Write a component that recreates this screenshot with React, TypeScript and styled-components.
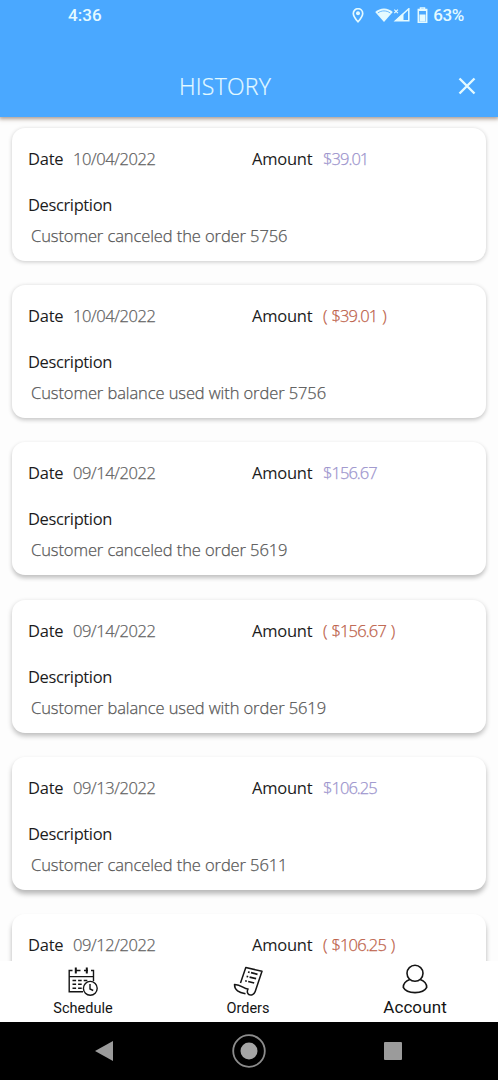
import React from "react";
import styled, { createGlobalStyle } from "styled-components";

const Global = createGlobalStyle`
  * { box-sizing: border-box; }
  body { margin: 0; background: #fdfdfd; }
`;

const Screen = styled.div`
  width: 498px;
  height: 1080px;
  display: flex;
  flex-direction: column;
  overflow: hidden;
  background: #fdfdfd;
  font-family: "Open Sans", "Noto Sans", sans-serif;
`;

const Header = styled.header`
  flex: none;
  height: 117px;
  background: #4aa8ff;
  box-shadow: 0 1px 4px 1px rgba(90, 60, 40, 0.5);
  z-index: 1;
  color: #e4faff;
`;

const StatusBar = styled.div`
  height: 31px;
  padding: 0 34px 0 68px;
  display: flex;
  align-items: center;
  font: 500 17px/31px Roboto, sans-serif;
`;

const Clock = styled.span`
  flex: 1;
  letter-spacing: 0.1px;
`;

const Battery = styled.span`
  letter-spacing: -0.4px;
  margin-left: 5px;
`;

const TitleBar = styled.div`
  height: 86px;
  padding: 24px 22px 0 179px;
  display: flex;
  align-items: flex-start;
  justify-content: space-between;
`;

const Title = styled.h1`
  margin: 0;
  font-weight: 300;
  font-size: 23px;
  line-height: 62px;
  height: 62px;
  letter-spacing: 0.25px;
  -webkit-text-stroke: 0.2px currentColor;
`;

const Close = styled.svg`
  margin-top: 22px;
`;

const List = styled.main`
  flex: 1;
  min-height: 0;
  overflow: hidden;
  padding: 11px 12px 0;
  display: flex;
  flex-direction: column;
  gap: 24.2px;
`;

const Card = styled.article<{ $depth: number }>`
  flex: none;
  height: 133px;
  border-radius: 13px;
  background: #fff;
  padding: 17px 16px 0;
  box-shadow: 0 ${(p) => 1 + p.$depth * 0.6}px ${(p) => 4 + p.$depth * 0.3}px
    rgba(0, 0, 0, ${(p) => 0.21 + p.$depth * 0.015});
`;

const Summary = styled.div`
  display: grid;
  grid-template-columns: 224px 1fr;
  height: 28px;
`;

const Field = styled.div`
  display: flex;
  line-height: 28px;
`;

const Label = styled.span<{ $width?: number }>`
  display: block;
  width: ${(p) => (p.$width ? `${p.$width}px` : "auto")};
  font-size: 16.5px;
  line-height: 28px;
  color: #1c1c1c;
  font-weight: 400;
  letter-spacing: ${(p) => (p.$width ? -0.24 : -0.38)}px;
  white-space: nowrap;
`;

const tones = { plain: "#626262", credit: "#9c94cd", debit: "#bd5f49" };

const Value = styled.span<{ $tone: keyof typeof tones }>`
  font-size: 16.5px;
  font-weight: 300;
  letter-spacing: ${(p) => (p.$tone === "plain" ? -0.4 : p.$tone === "credit" ? -0.95 : -0.85)}px;
  word-spacing: ${(p) => (p.$tone === "debit" ? 1.4 : 0)}px;
  color: ${(p) => tones[p.$tone]};
  -webkit-text-stroke: 0.25px currentColor;
  white-space: pre;
`;

const Details = styled.div`
  padding-top: 18px;
`;

const Description = styled.p`
  margin: 3px 0 0 3px;
  font-size: 16.5px;
  line-height: 28px;
  font-weight: 300;
  letter-spacing: -0.09px;
  color: #585858;
  -webkit-text-stroke: 0.25px currentColor;
  white-space: nowrap;
`;

const Tabs = styled.nav`
  flex: none;
  height: 61px;
  background: #fff;
  display: grid;
  grid-template-columns: 166px 164px 170px;
  z-index: 1;
`;

const Tab = styled.div<{ $active?: boolean }>`
  display: flex;
  flex-direction: column;
  align-items: center;
  color: #141414;
  font: 400 ${(p) => (p.$active ? 17 : 14.5)}px/${(p) => (p.$active ? 20 : 21)}px Roboto, sans-serif;
  letter-spacing: ${(p) => (p.$active ? 0.1 : 0)}px;

  svg {
    margin-top: 3px;
    margin-bottom: ${(p) => (p.$active ? 1 : 2)}px;
  }
`;

const SystemNav = styled.div`
  flex: none;
  height: 58px;
  background: #000;
  display: flex;
  justify-content: space-between;
  align-items: center;
  padding: 0 96px 0 95px;
`;

const PinIcon = () => (
  <svg width="12" height="16" viewBox="0 0 12 16" fill="none" stroke="currentColor">
    <path d="M6 13.8C3.4 10.800 1.300 8 1.300 5.400a4.700 4.700 0 0 1 9.400 0c0 2.600-2.100 5.400-4.700 8.400Z" strokeWidth="1.700" />
    <circle cx="6" cy="5.200" r="2" fill="currentColor" stroke="none" />
  </svg>
);

const SignalIcon = () => (
  <svg width="35" height="16" viewBox="0 0 35 16" fill="none" stroke="currentColor" style={{ marginLeft: 11 }}>
    <path d="M.2 4C5.200-.8 12.800-.8 17.800 4L9 14Z" fill="currentColor" stroke="none" />
    <path d="M2.800 5C6.500 2.200 11.500 2.200 15.200 5" stroke="#4aa8ff" strokeWidth=".8" />
    <path d="m19.300 1.600 3.600 3.600m0-3.600-3.600 3.600" strokeWidth="1.200" />
    <path d="M20.500 12.800 33.800.8v12Z" strokeWidth="1.500" />
    <path d="M20 12.800 28.500 5v7.800Z" fill="currentColor" stroke="none" />
  </svg>
);

const BatteryIcon = () => (
  <svg width="11" height="17" viewBox="0 0 11 17" style={{ marginLeft: 7 }}>
    <path d="M3.500 1h4v1.500h2.200v12.800H1.300V2.500h2.200Z" fill="none" stroke="currentColor" strokeWidth="1.500" />
    <path d="M2.500 7.500h6v7h-6Z" fill="currentColor" />
    <path d="M2 2h7v2H2Z" fill="currentColor" />
  </svg>
);

const ScheduleIcon = () => (
  <svg width="32" height="32" viewBox="0 0 32 32" fill="none" stroke="#151515" strokeWidth="1.400">
    <path d="M5.500 6.500H2.200V27.800H16M8 6.500h5.500M17 6.500h4M24 6.500h2.500V17M2.200 12.600h24.300" />
    <path d="M8.800 3.500v6M19.800 3.500v6" strokeWidth="2" />
    <path d="M5.500 16.500h3.600m2 0h3.600m2 0h3.600M5.500 20.300h3.600m2 0h3.600M5.500 24.200h3.600m2 0h3.600" strokeWidth="1.600" />
    <circle cx="23.300" cy="24.300" r="6.900" fill="#fff" />
    <path d="M23 20v5l3.200 1.500" />
  </svg>
);

const OrdersIcon = () => (
  <svg width="32" height="32" viewBox="0 0 32 32" fill="none" stroke="#151515" strokeWidth="1.500" strokeLinejoin="round">
    <path d="M8.500 19 13.800 3.500l16.200 3.800-6.800 20.200c-1 2.800-4 4.300-6 3.200-2-.9-2.400-3.200-1.200-5.700-4.200.2-6.700-4.700-13.500-4.500 0 6 4.500 7.800 11 9.300" />
    <path d="m16 8 1.600.4m1.400.3 6.500 1.600M14.600 12.400l1.600.4m1.400.3 6.500 1.600M13.200 16.800l1.600.4m1.400.3 6 1.500" strokeWidth="1.700" />
  </svg>
);

const AccountIcon = () => (
  <svg width="32" height="32" viewBox="0 0 32 32" fill="none" stroke="#151515" strokeWidth="1.600" strokeLinejoin="round">
    <circle cx="16" cy="9.300" r="8" />
    <path d="M10.800 15.500C6.600 17 4.300 20 4.300 23.400c3.500 7 19.900 7 23.400 0 0-3.400-2.300-6.400-6.500-7.900" />
  </svg>
);

const entries = [
  { date: "10/04/2022", amount: "$39.01", debit: false, text: "Customer canceled the order 5756" },
  { date: "10/04/2022", amount: "$39.01", debit: true, text: "Customer balance used with order 5756" },
  { date: "09/14/2022", amount: "$156.67", debit: false, text: "Customer canceled the order 5619" },
  { date: "09/14/2022", amount: "$156.67", debit: true, text: "Customer balance used with order 5619" },
  { date: "09/13/2022", amount: "$106.25", debit: false, text: "Customer canceled the order 5611" },
  { date: "09/12/2022", amount: "$106.25", debit: true, text: "" },
];

export default function App() {
  return (
    <>
      <Global />
      <Screen>
        <Header>
          <StatusBar>
            <Clock>4:36</Clock>
            <PinIcon />
            <SignalIcon />
            <BatteryIcon />
            <Battery>63%</Battery>
          </StatusBar>
          <TitleBar>
            <Title>HISTORY</Title>
            <Close width="18" height="18" viewBox="0 0 18 18" stroke="currentColor" strokeWidth="2.400">
              <path d="m1.500 1.500 15 15m0-15-15 15" />
            </Close>
          </TitleBar>
        </Header>
        <List>
          {entries.map((entry, index) => (
            <Card key={index} $depth={index}>
              <Summary>
                <Field>
                  <Label $width={45}>Date</Label>
                  <Value $tone="plain">{entry.date}</Value>
                </Field>
                <Field>
                  <Label $width={71}>Amount</Label>
                  <Value $tone={entry.debit ? "debit" : "credit"}>
                    {entry.debit ? `( ${entry.amount} )` : entry.amount}
                  </Value>
                </Field>
              </Summary>
              {entry.text && (
                <Details>
                  <Label>Description</Label>
                  <Description>{entry.text}</Description>
                </Details>
              )}
            </Card>
          ))}
        </List>
        <Tabs>
          <Tab>
            <ScheduleIcon />
            Schedule
          </Tab>
          <Tab>
            <OrdersIcon />
            Orders
          </Tab>
          <Tab $active>
            <AccountIcon />
            Account
          </Tab>
        </Tabs>
        <SystemNav>
          <svg width="18" height="20" viewBox="0 0 18 20">
            <path d="M0 10 18 0v20Z" fill="#9b9b9b" />
          </svg>
          <svg width="34" height="34" viewBox="0 0 34 34">
            <circle cx="17" cy="17" r="15.800" fill="none" stroke="#8c8c8c" strokeWidth="1.800" />
            <circle cx="17" cy="17" r="8.500" fill="#a5a5a5" />
          </svg>
          <svg width="18" height="18" viewBox="0 0 18 18">
            <rect width="18" height="18" rx="1" fill="#9b9b9b" />
          </svg>
        </SystemNav>
      </Screen>
    </>
  );
}
